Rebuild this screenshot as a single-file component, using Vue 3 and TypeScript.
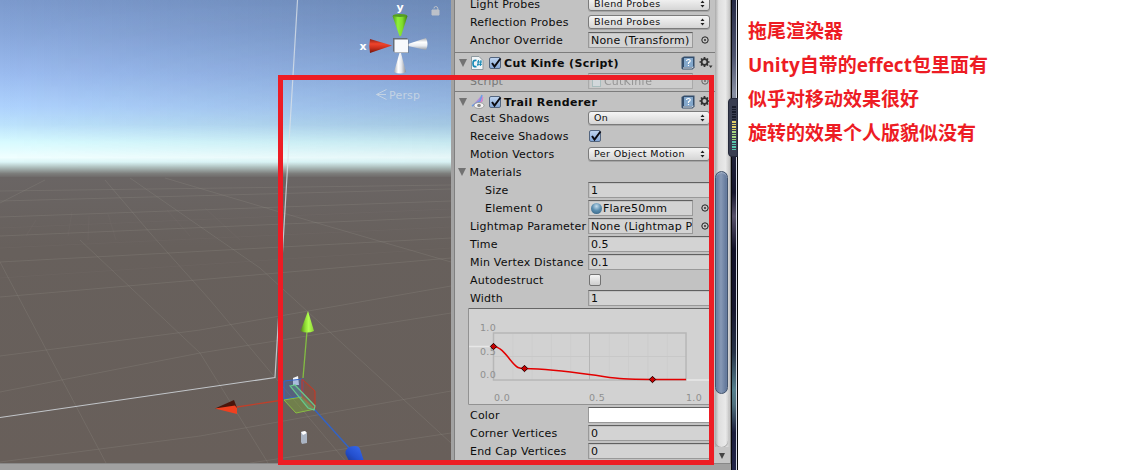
<script setup lang="ts">
type Kind = 'popup' | 'object' | 'check' | 'text' | 'foldout' | 'color'

interface Row {
  label: string
  kind: Kind
  value?: string
  checked?: boolean
  indent?: boolean
  ball?: boolean
  script?: boolean
}

interface Section {
  title?: string
  icon?: 'script' | 'trail'
  rows: Row[]
}

const sections: Section[] = [
  {
    rows: [
      { label: 'Light Probes', kind: 'popup', value: 'Blend Probes' },
      { label: 'Reflection Probes', kind: 'popup', value: 'Blend Probes' },
      { label: 'Anchor Override', kind: 'object', value: 'None (Transform)' },
    ],
  },
  {
    title: 'Cut Kinfe (Script)',
    icon: 'script',
    rows: [{ label: 'Script', kind: 'object', value: 'CutKinfe', script: true }],
  },
  {
    title: 'Trail Renderer',
    icon: 'trail',
    rows: [
      { label: 'Cast Shadows', kind: 'popup', value: 'On' },
      { label: 'Receive Shadows', kind: 'check', checked: true },
      { label: 'Motion Vectors', kind: 'popup', value: 'Per Object Motion' },
      { label: 'Materials', kind: 'foldout' },
      { label: 'Size', kind: 'text', value: '1', indent: true },
      { label: 'Element 0', kind: 'object', value: 'Flare50mm', indent: true, ball: true },
      { label: 'Lightmap Parameter', kind: 'object', value: 'None (Lightmap P' },
      { label: 'Time', kind: 'text', value: '0.5' },
      { label: 'Min Vertex Distance', kind: 'text', value: '0.1' },
      { label: 'Autodestruct', kind: 'check', checked: false },
      { label: 'Width', kind: 'text', value: '1' },
    ],
  },
]

const tailRows: Row[] = [
  { label: 'Color', kind: 'color' },
  { label: 'Corner Vertices', kind: 'text', value: '0' },
  { label: 'End Cap Vertices', kind: 'text', value: '0' },
]

const groups: Section[] = [...sections, { rows: tailRows }]

const minorX = [1, 2, 3, 4, 6, 7, 8, 9].map((i) => 25.5 + i * 19.3)
const keys = [
  { x: 25.5, y: 38.5 },
  { x: 56.5, y: 60.5 },
  { x: 184.5, y: 71.5 },
]

const notes = ['拖尾渲染器', 'Unity自带的effect包里面有', '似乎对移动效果很好', '旋转的效果个人版貌似没有']
const meter = Array.from({ length: 18 }, (_, i) => (i < 6 ? 'off' : i < 10 ? 'hot' : i < 14 ? 'mid' : 'low'))
</script>

<template>
  <div class="page">
    <div class="editor">
      <div class="work">
        <svg class="scene" width="451" height="463" viewBox="0 0 451 463">
          <defs>
            <linearGradient id="sky" x1="0" y1="0" x2="0" y2="1">
              <stop offset="0" stop-color="#7c9acd" />
              <stop offset=".2" stop-color="#89a8dc" />
              <stop offset=".42" stop-color="#9bbcf0" />
              <stop offset=".6" stop-color="#aed2fd" />
              <stop offset=".7" stop-color="#bce2fc" />
              <stop offset=".8" stop-color="#d8fbff" />
              <stop offset=".885" stop-color="#f0ffff" />
              <stop offset=".91" stop-color="#dcf6f7" />
              <stop offset=".94" stop-color="#aebfbd" />
              <stop offset=".975" stop-color="#7d7e7c" />
              <stop offset="1" stop-color="#6a6564" />
            </linearGradient>
            <linearGradient id="shade" x1="0" y1="0" x2="1" y2="0">
              <stop offset="0" stop-color="#405878" stop-opacity="0" />
              <stop offset="1" stop-color="#3f5a78" stop-opacity=".26" />
            </linearGradient>
            <linearGradient id="fade" x1="0" y1="0" x2="0" y2="1">
              <stop offset="0" stop-color="#fff" />
              <stop offset=".7" stop-color="#bbb" />
              <stop offset=".95" stop-color="#000" />
            </linearGradient>
            <mask id="skyMask"><rect width="451" height="178" fill="url(#fade)" /></mask>
            <linearGradient id="ground" x1="0" y1="0" x2="0" y2="1">
              <stop offset="0" stop-color="#6a6564" />
              <stop offset=".25" stop-color="#67605c" />
              <stop offset="1" stop-color="#685f5a" />
            </linearGradient>
            <linearGradient id="greenCone"><stop offset="0" stop-color="#4f9a16" /><stop offset=".35" stop-color="#8ff03a" /><stop offset=".65" stop-color="#7fdd2b" /><stop offset="1" stop-color="#3f7912" /></linearGradient>
            <linearGradient id="limeCone"><stop offset="0" stop-color="#4e7d1a" /><stop offset=".35" stop-color="#8edb34" /><stop offset=".6" stop-color="#b2ff50" /><stop offset="1" stop-color="#8bd135" /></linearGradient>
            <linearGradient id="redCone" x1="0" y1="0" x2="0" y2="1"><stop offset="0" stop-color="#8b2015" /><stop offset=".35" stop-color="#ef442c" /><stop offset=".65" stop-color="#c92e1b" /><stop offset="1" stop-color="#6f150b" /></linearGradient>
            <linearGradient id="blueCone" x1="0" y1="1" x2="1" y2="0"><stop offset="0" stop-color="#1c3794" /><stop offset=".4" stop-color="#2450cf" /><stop offset="1" stop-color="#3a6df0" /></linearGradient>
            <linearGradient id="whiteH" x1="0" y1="0" x2="0" y2="1"><stop offset="0" stop-color="#a5aab2" /><stop offset=".35" stop-color="#fff" /><stop offset=".65" stop-color="#e8ebf0" /><stop offset="1" stop-color="#9399a3" /></linearGradient>
            <linearGradient id="whiteV"><stop offset="0" stop-color="#a5aab2" /><stop offset=".35" stop-color="#fff" /><stop offset=".6" stop-color="#e8ebf0" /><stop offset="1" stop-color="#888d96" /></linearGradient>
          </defs>
          <rect width="451" height="178" fill="url(#sky)" />
          <rect width="451" height="178" fill="url(#shade)" mask="url(#skyMask)" />
          <rect y="177" width="451" height="286" fill="url(#ground)" />
          <g fill="none" stroke="#938e89" stroke-opacity=".26">
            <path d="M0 191L451 185M0 201L451 189M0 217L451 201M0 236L451 217M0 262L451 238M0 297L451 258M0 356L200 330L451 286M0 392L200 353L451 313M0 462L200 436L451 391M250 463L451 433" />
            <path d="M45 180L0 203M105 180L151 234L210 300L347 463M165 178L300 218L451 262M130 178L260 268L451 443M80 240L200 353L268 463M0 262L106 463" />
          </g>
          <g fill="none" stroke="#938e89" stroke-opacity=".08">
            <path d="M36 220L26 236M72 212L68 236M89 216L88 240M108 214L116 240M167 210L190 236M205 208L240 240M0 228L451 209M0 248L451 227M0 278L451 248" />
          </g>
          <path d="M297.5 0L275 377.500L0 417.500" fill="none" stroke="#dbe2e8" stroke-opacity=".78" stroke-width="1.2" />

          <path d="M303 378L307 331" stroke="#83bd43" stroke-width="1.3" />
          <path d="M308 311L314 331Q307 334 300.500 331Z" fill="url(#limeCone)" />
          <path d="M237 407L283 400" stroke="#bf402b" stroke-width="1.3" />
          <path d="M215 408.500L234 400L237 408Z" fill="#4a150b" />
          <path d="M215 408.500L235 405.500L237 408V414Z" fill="#f0401f" />
          <path d="M314 409L351 450" stroke="#3263c7" stroke-width="1.4" />
          <path d="M345.500 454Q345 446 355 446Q359 446 360 449L364 461H349Z" fill="url(#blueCone)" />
          <path d="M293 378L298 376L299 385H293Z" fill="#f3f6fa" />
          <path d="M284 381L303 379V396L284 399Z" fill="#3d64ae" fill-opacity=".4" stroke="#3567c8" />
          <path d="M284 400L302 397L315 409L296 413Z" fill="#7fae38" fill-opacity=".4" stroke="#88bd42" />
          <path d="M302 379L315 391V409L302 397Z" fill="#a1422f" fill-opacity=".4" stroke="#cf3520" />
          <path d="M290 386L295 385L315 406L314 410L308 408Z" fill="#63cba0" fill-opacity=".2" stroke="#67c98a" stroke-width="1.2" />
          <path d="M301 432L305 431L307 434V443L302 444L301 442Z" fill="#aab4c3" />
          <path d="M301 432L305 431L307 433L303 435Z" fill="#fff" />

          <path d="M392.500 16Q400 12 407.500 16L401 36H399.500Z" fill="url(#greenCone)" />
          <ellipse cx="400" cy="15.500" rx="7.200" ry="1.500" fill="#539b23" />
          <path d="M370 39L392 45.500L370 53Q368.500 46 370 39Z" fill="url(#redCone)" />
          <path d="M408 44L426 38Q429 44 426 50L408 46Z" fill="url(#whiteH)" />
          <path d="M399.500 53H401L406 72Q400 75 394 72Z" fill="url(#whiteV)" />
          <path d="M393 38H407L408.500 40V53H395L393 51Z" fill="#656d78" />
          <rect x="394.500" y="39.500" width="13.500" height="13" fill="#f7f9fc" />
          <g class="axis"><text x="396.500" y="11">y</text><text x="359.500" y="50">x</text></g>
          <path d="M432 10H439V15H432Z" fill="#bcc1c9" stroke="#bcc1c9" />
          <path d="M437.800 10V8.200Q437.500 6.500 435.700 6.500Q434 6.500 434 8.500" fill="none" stroke="#bcc1c9" />
          <path d="M386.500 89.500L376.500 94.500L386.500 99.500M376.500 94.500H386" fill="none" stroke="#c3d2e3" />
          <text class="persp" x="389" y="99" textLength="31">Persp</text>
        </svg>
        <div class="splitter"></div>
        <div class="inspector">
          <section v-for="(group, gi) in groups" :key="gi" class="section">
            <svg v-if="gi === 3" class="curve" width="243" height="97" viewBox="0 0 243 97">
              <rect width="243" height="97" fill="#d2d2d2" />
              <path d="M0 .5H243" stroke="#666" />
              <path d="M.5 0V96.500H243" fill="none" stroke="#929292" />
              <path d="M1 38.500H25M218 72H243" stroke="#e7e7e7" stroke-width="1.500" />
              <path v-for="x in minorX" :key="x" :d="`M${x} 26V72`" stroke="#cdcdcd" />
              <path d="M26 48.500H218" stroke="#c8c8c8" />
              <path d="M121.500 25V72" stroke="#b5b5b5" />
              <rect x="25.500" y="25" width="192.500" height="47" fill="none" stroke="#b7b7b7" stroke-width="1.500" />
              <g class="ticks">
                <text x="12" y="23">1.0</text><text x="12" y="47">0.5</text><text x="12" y="70">0.0</text>
                <text x="26" y="93">0.0</text><text x="121" y="93">0.5</text><text x="218" y="93">1.0</text>
              </g>
              <path d="M25.500 38.500C36 39 43 56 50 59.500Q52 60.500 56.500 60.500C78 61 92 62.500 121.500 66.500S150 71.500 184.500 71.500H218" fill="none" stroke="#e30000" stroke-width="1.500" />
              <path v-for="k in keys" :key="k.x" :d="`M${k.x} ${k.y - 3.2}l3.200 3.200l-3.200 3.200l-3.200 -3.200z`" fill="#c80000" stroke="#210000" />
            </svg>
            <header v-if="group.title" class="head">
              <i class="tri"></i>
              <svg v-if="group.icon === 'script'" class="comp" width="16" height="16" viewBox="0 0 16 16">
                <path d="M2.500 1.500H10L14 5.500V14.500H2.500Z" fill="#f2f5f7" stroke="#8e999f" />
                <path d="M7.500 5.500Q4 4.500 4 8.500T7.500 11.500" fill="none" stroke="#1689b5" stroke-width="1.700" />
                <path d="M9.500 5L8.800 11M12 5L11.300 11M8 7H13M8 9.300H13" stroke="#1689b5" fill="none" />
              </svg>
              <svg v-else class="comp" width="16" height="16" viewBox="0 0 16 16">
                <path d="M13 1L14 7L8 11L3 12Z" fill="#b48bd8" />
                <path d="M13 1L11 7L3 12" fill="none" stroke="#6d9ce8" stroke-width="1.500" />
                <path d="M14 3L12 8L5 12" fill="none" stroke="#e47fc4" />
                <ellipse cx="10" cy="11.500" rx="5" ry="3" fill="#f5f5f5" stroke="#909090" stroke-width=".8" />
                <circle cx="10" cy="11.500" r="1.800" fill="#8a8a8a" />
              </svg>
              <span class="box on"><svg width="14" height="14" viewBox="0 0 14 14"><path d="M3 6L5.500 9.500L11.500 1.500" /></svg></span>
              <h3>{{ group.title }}</h3>
              <svg class="help" width="14" height="14" viewBox="0 0 14 14">
                <path d="M.5 2L3 .5H13.500V11.500L11.500 13.500H1.500L.5 12.500Z" fill="#354e6c" />
                <path d="M3 2H12V11H3Z" fill="#83a7cb" /><path d="M2 12H11L12.500 11" stroke="#e9edf2" fill="none" />
                <path d="M5.500 5Q5.700 3.500 7.500 3.500T9.200 5Q9.200 6 7.500 6.800V8M7.500 9V10" fill="none" stroke="#fff" stroke-width="1.200" />
              </svg>
              <svg class="gear" width="14" height="14" viewBox="0 0 14 14">
                <circle cx="5.500" cy="6" r="2.900" fill="none" stroke="#333" stroke-width="1.800" />
                <path d="M5.500 1V3M5.500 9V11M.5 6H2.500M8.500 6H10.500M2 2.500L3.300 3.800M7.700 8.200L9 9.500M2 9.500L3.300 8.200M7.700 3.800L9 2.500" stroke="#333" stroke-width="1.700" />
                <path d="M9.800 9.500H13.500L11.700 12Z" fill="#333" />
              </svg>
            </header>
            <div v-for="row in group.rows" :key="row.label" class="row" :class="{ indent: row.indent, dim: row.script }">
              <i v-if="row.kind === 'foldout'" class="tri"></i>
              <label>{{ row.label }}</label>
              <div v-if="row.kind === 'popup'" class="popup">
                <span>{{ row.value }}</span>
                <svg width="5" height="8" viewBox="0 0 5 8"><path d="M2.500 .5L4.500 3H.5ZM2.500 7.500L4.500 5H.5Z" fill="#222" /></svg>
              </div>
              <div v-else-if="row.kind === 'text'" class="field">{{ row.value }}</div>
              <div v-else-if="row.kind === 'color'" class="field white"></div>
              <template v-else-if="row.kind === 'object'">
                <div class="field object"><i v-if="row.ball" class="ball"></i><i v-if="row.script" class="doc"></i>{{ row.value }}</div>
                <svg class="pick" width="8" height="8" viewBox="0 0 8 8"><circle cx="4" cy="4" r="3.200" /><circle class="dot" cx="4" cy="4" r=".9" /></svg>
              </template>
              <span v-else-if="row.kind === 'check'" class="box" :class="{ on: row.checked }">
                <svg v-if="row.checked" width="14" height="14" viewBox="0 0 14 14"><path d="M3 6L5.500 9.500L11.500 1.500" /></svg>
              </span>
            </div>
          </section>
        </div>
        <div class="scroll">
          <div class="thumb"></div>
          <div class="rest"></div>
          <div class="down"><i></i></div>
        </div>
      </div>
      <div class="status"></div>
    </div>
    <div class="edge"></div>
    <div class="notes"><p v-for="n in notes" :key="n">{{ n }}</p></div>
    <div class="meter"><i v-for="(m, i) in meter" :key="i" :class="m"></i></div>
    <div class="frame"></div>
  </div>
</template>

<style>
body { background: #fff; overflow: hidden; }
</style>

<style scoped>
.page { position: relative; display: flex; width: 1123px; height: 470px; overflow: hidden; background: #fff; font-family: "DejaVu Sans", sans-serif; font-size: 11px; color: #0c0c0c; }
.editor { width: 731px; display: flex; flex-direction: column; }
.work { display: flex; height: 463px; }
.scene { display: block; flex: none; }
.axis { fill: #fff; font: bold 11px "DejaVu Sans", sans-serif; }
.persp { fill: #c3d2e3; font: 11px "DejaVu Sans", sans-serif; }
.splitter { width: 4px; box-sizing: border-box; background: #a2a2a2; border-right: 1px solid #808080; }
.inspector { width: 260px; background: #c2c2c2; overflow: hidden; }
.section:first-child { margin-top: -5px; height: 57px; }
.section:nth-child(2) { height: 39px; }
.row { display: flex; align-items: center; height: 18px; }
.row label { width: 118px; margin-left: 15px; white-space: nowrap; letter-spacing: .2px; flex: none; }
.row .tri { margin: 0 -12px 0 3px; }
.row.indent label { margin-left: 30px; width: 103px; }
.row.dim { color: #777; }
.row.dim .field, .row.dim .pick { opacity: .6; }
.tri { flex: none; border: 4.5px solid transparent; border-top: 8px solid #727272; border-bottom: 0; }
.row .tri + label { margin-left: 15.5px; }
.popup { width: 122px; height: 14px; box-sizing: border-box; border: 1px solid #7b7b7b; border-radius: 3px; background: linear-gradient(#f5f5f5, #d5d5d5); display: flex; align-items: center; justify-content: space-between; padding: 0 4px 0 5px; font-size: 9.500px; letter-spacing: .38px; line-height: 12px; box-shadow: 0 1px 0 #a5a5a5; }
.popup svg { display: block; }
.popup span { margin-top: -1px; }
.field { box-sizing: border-box; width: 123px; height: 16px; border: 1px solid #999; border-top-color: #606060; background: #d3d3d3; padding-left: 2px; line-height: 15px; white-space: nowrap; overflow: hidden; box-shadow: inset 1px 1px 0 #c2c2c2; }
.field.white { background: #fff; box-shadow: none; }
.field.object { width: 105px; display: flex; align-items: center; letter-spacing: .18px; }
.ball { width: 11px; height: 11px; margin-right: 1px; border-radius: 50%; background: radial-gradient(circle at 50% 30%, #c3dcec 0, #5b8eb0 45%, #315c7b 100%); flex: none; }
.doc { width: 9px; height: 11px; margin: 0 3px 0 1px; background: #dfe8ed; border: 1px solid #9bb; box-sizing: border-box; flex: none; }
.pick { margin-left: 7.500px; fill: none; stroke: #222; stroke-width: 1; }
.pick .dot { fill: #222; stroke: none; }
.box { flex: none; box-sizing: border-box; width: 12px; height: 12px; margin-left: 1px; border: 1px solid #737373; border-radius: 2px; background: linear-gradient(#f4f4f4, #cecece); }
.box.on { background: linear-gradient(#bed3ee, #86a9d8); border-color: #53657f; }
.box svg { display: block; margin: -1px; overflow: visible; fill: none; stroke: #0b0b12; stroke-width: 2; }
.head { height: 19px; border-top: 1px solid #7c7c7c; padding: 0 0 0 4px; display: flex; align-items: center; }
.section:nth-child(3) .head { height: 17px; padding-top: 1px; box-sizing: content-box; margin-bottom: -1px; }
.head .comp { margin: 0 3px 0 2px; flex: none; }
.head h3 { margin: 1px 0 0 3px; font-size: 11px; font-weight: bold; letter-spacing: .38px; width: 177px; white-space: nowrap; }
.help, .gear { flex: none; }
.gear { margin-left: 4px; }
.curve { display: block; margin: 1px 0 1px 13px; }
.ticks { fill: #8f8f8f; font: 9.500px "DejaVu Sans", sans-serif; letter-spacing: .3px; }
.scroll { width: 16px; box-sizing: border-box; border-right: 1px solid #888; background: linear-gradient(90deg, #aaa, #dedede 25%, #e9e9e9 70%, #c3c3c3); display: flex; flex-direction: column; }
.thumb { margin: 171px 2px 0 0; height: 223px; box-sizing: border-box; border: 1px solid #42536d; border-radius: 7px; background: linear-gradient(90deg, #6179a0, #8799b5 45%, #5d7397); box-shadow: inset 0 1px 1px #a8b6ca; }
.rest { height: 53px; margin-right: 2px; border-radius: 0 0 7px 7px; box-shadow: 0 1px 1px #999; box-sizing: border-box; }
.down { flex: 1; background: #c6c6c6; display: flex; justify-content: center; padding-right: 1px; }
.down i { height: 0; margin-top: 6px; border: 3.500px solid transparent; border-top: 6px solid #444; border-bottom: 0; }
.status { height: 7px; box-sizing: border-box; background: #a1a1a1; border-top: 1px solid #888; }
.edge { width: 7px; box-sizing: border-box; border-left: 1px solid #080808; border-right: 1px solid #050505; background: linear-gradient(#252a45 0, #4e546f 12%, #8990a3 20%, #20223a 32%, #15152c 41%, #57516a 46%, #101027 53%, #16162e 66%, #263247 75%, #55808e 83%, #50717f 86%, #1b1d3b 92%, #222548 100%); box-shadow: inset -1px 0 0 #d5d9e2; }
.notes { padding: 14px 0 0 10px; }
.notes p { margin: 0; height: 34px; font: bold 19px/34px "Open Sans", "Noto Sans CJK SC", sans-serif; color: #ed1c24; white-space: nowrap; }
.meter { position: absolute; left: 728px; top: 98px; width: 10px; height: 59px; box-sizing: border-box; border-radius: 4px 0 0 4px; border: 1px solid #25293a; background: #393e51; padding: 7px 1px 0 3px; display: flex; flex-direction: column; gap: 1px; }
.meter i { height: 1.500px; flex: none; }
.off { background: #171b2a; }
.hot { background: #e2cf68; }
.mid { background: #a6d681; }
.low { background: #57c9ae; }
.frame { position: absolute; left: 278px; top: 75px; width: 436px; height: 390px; box-sizing: border-box; border: 5px solid #ed1c24; }
</style>
